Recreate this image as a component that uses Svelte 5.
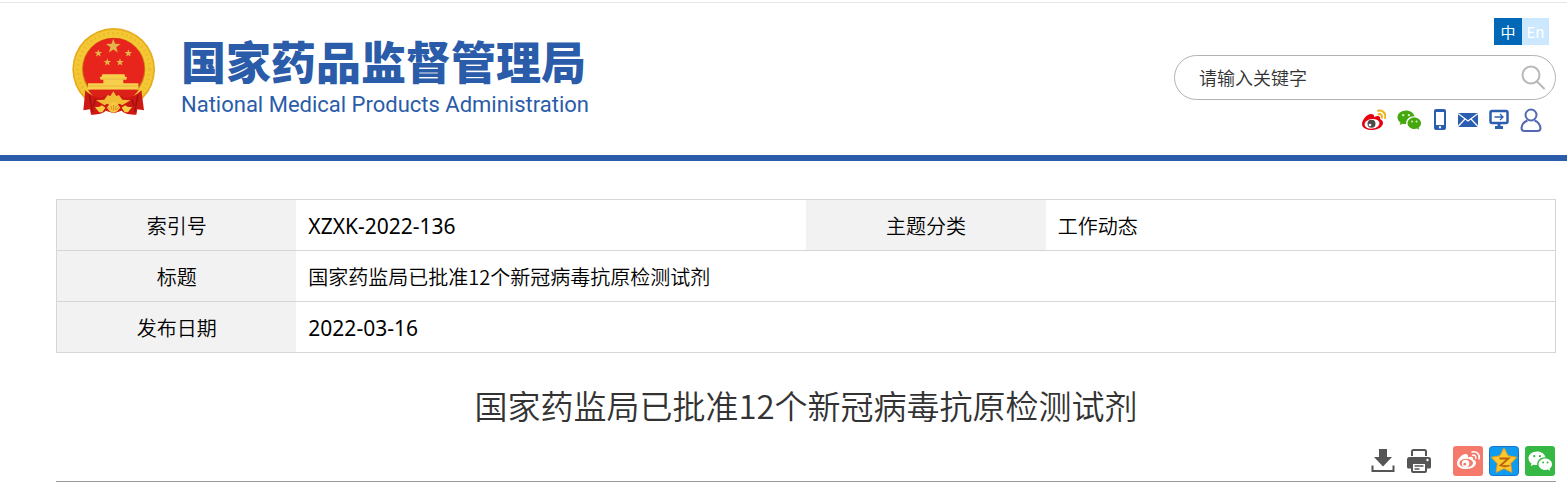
<script lang="ts">
  const title = '国家药监局已批准12个新冠病毒抗原检测试剂';

  const rows = [
    [
      { label: '索引号', value: 'XZXK-2022-136', code: true },
      { label: '主题分类', value: '工作动态' },
    ],
    [{ label: '标题', value: title }],
    [{ label: '发布日期', value: '2022-03-16', code: true }],
  ];

  const emblemStars = [
    [160, 79, 23],
    [115, 100, 12],
    [205, 100, 12],
    [142, 127, 12],
    [180, 127, 12],
  ];

  let keyword = $state('');

  function star(cx: number, cy: number, r: number, inner = 0.4) {
    const points = [];
    for (let i = 0; i < 10; i++) {
      const radius = i % 2 ? r * inner : r;
      const angle = (Math.PI / 5) * i - Math.PI / 2;
      points.push(`${(cx + radius * Math.cos(angle)).toFixed(1)},${(cy + radius * Math.sin(angle)).toFixed(1)}`);
    }
    return points.join(' ');
  }
</script>

{#snippet wechat(eye)}
  <path d="M9.500 2C4.300 2 .5 5.200 .5 9.200c0 2.300 1.200 4.200 3.100 5.500L2.800 17.300l3.100-1.500c1.200.3 2.300.5 3.700.4C9 11.500 12.500 8 18.200 8 17.300 4.400 13.800 2 9.500 2z" />
  <path d="M25 15.300c0-3.400-3.200-6-7-6s-7 2.600-7 6 3.200 6 7 6c.9 0 1.800-.2 2.600-.4l2.500 1.300-.7-2.200c1.600-1.100 2.600-2.800 2.600-4.700z" />
  <g fill={eye}>
    <circle cx="6.500" cy="7" r="1.200" />
    <circle cx="12.400" cy="7" r="1.200" />
    <circle cx="15.700" cy="13.500" r="1" />
    <circle cx="20.300" cy="13.500" r="1" />
  </g>
{/snippet}

<header class="header">
  <div class="wrap header-row">
    <a class="brand" href="#home">
      <svg class="emblem" viewBox="36 24 252 264" aria-hidden="true">
        <circle cx="161" cy="148" r="124" fill="#e6ac1e" />
        <circle cx="161" cy="148" r="119" fill="#f4c735" />
        <circle cx="161" cy="148" r="108" fill="none" stroke="#edba2c" stroke-width="9" stroke-dasharray="5 9" />
        <circle cx="161" cy="148" r="95" fill="#c9810f" />
        <circle cx="161" cy="146" r="92" fill="#e8251d" />
        {#each emblemStars as [cx, cy, r]}
          <polygon points={star(cx, cy, r)} fill="#e3b548" />
        {/each}
        <path d="M127 163h66l3 8h5l-2 8h-9v11h45v19H84v-19h46v-11h-8l-3-8h5z" fill="#f7cf4b" />
        <path d="M84 198h152M128 177h66" stroke="#e0a935" stroke-width="2" />
        <path d="M84 209h152c-7 12-17 21-28 28h-96c-12-7-21-16-28-28z" fill="#dc2119" />
        <path d="M76 211c13 14 30 21 48 22l18-9h36l18 9c19-1 36-9 48-22l8 60-20-3-3 16c-19 0-35-2-44-12l-24 8-24-8c-10 10-27 12-44 12l-3-16-20 3z" fill="#cf1713" />
        <path d="M88 224l10 52m136-52l-10 52M106 238l-6 20m116-20l6 20" stroke="#971312" stroke-width="4" fill="none" />
        <path d="M105 261c9 1 14 0 21-5l10 7-9 14h-10zm111 0c-9 1-14 0-21-5l-10 7 9 14h10z" fill="#f6ce43" />
        <path d="M133 239l10-14 8 3 9-14 9 14 8-3 10 14 25 2-26 15-7-5-19 8-19-8-7 5-26-15z" fill="#f2bd36" />
        <path d="M140 263l9-12 11-5 12 5 9 12-9 11-12 5-11-5z" fill="#f6c943" />
        <path d="M150 268l-8-6m11-5l3 13m5-15v17m8-16l-3 14m11-8l-8 7" stroke="#dd8e22" stroke-width="3" />
      </svg>
      <span class="brand-text">
        <span class="brand-cn">国家药品监督管理局</span>
        <span class="brand-en">National Medical Products Administration</span>
      </span>
    </a>

    <div class="tools">
      <nav class="langs" aria-label="语言">
        <a class="lang active" href="#cn">中</a>
        <a class="lang" href="#en">En</a>
      </nav>
      <form class="search" onsubmit={(e) => e.preventDefault()}>
        <input type="text" aria-label="请输入关键字" placeholder="请输入关键字" bind:value={keyword} />
        <button type="submit" aria-label="搜索">
          <svg width="26" height="26" viewBox="0 0 26 26" fill="none" stroke="#b8b8b8" stroke-width="2">
            <circle cx="11" cy="10" r="8.500" />
            <path d="M17 16.500l7 7" stroke-linecap="round" />
          </svg>
        </button>
      </form>
      <nav class="quick" aria-label="快捷入口">
        <a href="#weibo" aria-label="微博">
          <svg width="24" height="24" viewBox="0 0 24 24">
            <path d="M9 6C5 6 0 12 0 16c0 4 5 6 10 6 7 0 11-4 11-7 0-2-1-3-3-4 .8-3-2-4-6-2 .5-2-.8-3-3-3z" fill="#e60012" />
            <ellipse cx="10" cy="15.800" rx="7.500" ry="4.800" fill="#fff" transform="rotate(-8 10 15.800)" />
            <circle cx="9.500" cy="15.800" r="4" fill="#4b4b4b" />
            <circle cx="8" cy="17" r="1.300" fill="#fff" />
            <path d="M16 2.800c4.500-1.200 8.500 2.600 7 7.200M16.500 6.200c2.400-.5 4 1.200 3.200 3.400" fill="none" stroke="#efb318" stroke-width="2" stroke-linecap="round" />
          </svg>
        </a>
        <a href="#wechat" aria-label="微信">
          <svg width="25" height="24" viewBox="0 0 26 24" fill="#45a80f">{@render wechat('#d9f2c7')}</svg>
        </a>
        <a href="#mobile" aria-label="手机">
          <svg width="14" height="24" viewBox="0 0 14 24">
            <path fill-rule="evenodd" d="M3 1h8a2 2 0 0 1 2 2v17a2 2 0 0 1-2 2H3a2 2 0 0 1-2-2V3a2 2 0 0 1 2-2zm0 3v13h8V4zm4 14a1.200 1.200 0 1 0 0 2.400A1.200 1.200 0 0 0 7 18z" fill="#2b5db0" />
          </svg>
        </a>
        <a href="#mail" aria-label="邮箱">
          <svg width="20" height="24" viewBox="0 0 20 24">
            <path d="M0 5h20v14H0z" fill="#2b5db0" />
            <path d="M0 5.500l10 7.500 10-7.500M0 18.500l7-7.500m13 7.500L13 11" fill="none" stroke="#fff" stroke-width="1.200" />
          </svg>
        </a>
        <a href="#desktop" aria-label="电脑版">
          <svg width="20" height="24" viewBox="0 0 20 24" fill="none" stroke="#2b5db0" stroke-width="2">
            <rect x="1.500" y="3" width="17" height="12" rx="1.500" stroke-width="2.500" />
            <path d="M10 15v4M6 19.500h8" stroke-width="3" />
            <path d="M5.500 9H14M11 6l3 3-3 3" stroke-width="1.300" />
          </svg>
        </a>
        <a href="#user" aria-label="用户">
          <svg width="22" height="24" viewBox="0 0 22 24" fill="none" stroke="#5468b4" stroke-width="2">
            <circle cx="11" cy="7" r="5.500" />
            <path d="M7.500 12.500C3.500 14 2 16.500 1.500 20c0 2 1 3 3 3h13c2 0 3-1 3-3-.5-3.500-2-6-6-7.500" />
          </svg>
        </a>
      </nav>
    </div>
  </div>
</header>

<main class="wrap">
  <table class="info">
    <colgroup>
      <col class="col-label" /><col class="col-value" />
      <col class="col-label" /><col class="col-value" />
    </colgroup>
    <tbody>
      {#each rows as row}
        <tr>
          {#each row as cell}
            <th scope="row">{cell.label}</th>
            <td class:code={cell.code} colspan={row.length === 1 ? 3 : 1}>{cell.value}</td>
          {/each}
        </tr>
      {/each}
    </tbody>
  </table>

  <h1>{title}</h1>

  <div class="actions">
    <div class="file-actions">
      <button type="button" aria-label="下载">
        <svg width="24" height="26" viewBox="0 0 24 26" fill="#555">
          <path d="M8 1h8v8h5l-9 9.500L3 9h5z" />
          <path d="M1.500 17.500V23h21v-5.500" fill="none" stroke="#555" stroke-width="2" />
        </svg>
      </button>
      <button type="button" aria-label="打印">
        <svg width="24" height="26" viewBox="0 0 24 26" fill="#555">
          <path d="M5 8V3.500A1.500 1.500 0 0 1 6.500 2h11A1.500 1.500 0 0 1 19 3.500V8" fill="none" stroke="#555" stroke-width="2" />
          <path d="M2.500 9h19A2.500 2.500 0 0 1 24 11.500V19a1.500 1.500 0 0 1-1.500 1.500h-21A1.500 1.500 0 0 1 0 19v-7.500A2.500 2.500 0 0 1 2.500 9z" />
          <circle cx="20.500" cy="12" r="1.200" fill="#fff" />
          <rect x="5" y="15" width="14" height="9" rx="1" fill="#fff" stroke="#555" stroke-width="2" />
          <path d="M7.500 18h9M7.500 21h5" stroke="#555" stroke-width="1.500" />
        </svg>
      </button>
    </div>
    <div class="share">
      <a href="#share-weibo" aria-label="分享到微博">
        <svg width="30" height="30" viewBox="0 0 30 30">
          <rect width="30" height="30" rx="3" fill="#f67a6c" />
          <path d="M12 8c-4 1-8 5.500-8 9.500C4 21 8 23 13 23c6 0 10-3 10-6 0-2-1-3-3-3.500.6-2.500-1.500-3.500-5-2C15.500 9 14.500 7.500 12 8z" fill="#fff" />
          <ellipse cx="13.200" cy="17" rx="6.800" ry="4.300" fill="#f67a6c" />
          <circle cx="12.600" cy="17.500" r="3.700" fill="#fff" />
          <circle cx="11.800" cy="18.200" r="1.400" fill="#f67a6c" />
          <path d="M19 6c4.500-1.200 8.500 2.500 7 7M19.500 9.200c2.200-.5 3.800 1 3.200 3.200" fill="none" stroke="#fff" stroke-width="1.500" stroke-linecap="round" />
        </svg>
      </a>
      <a href="#share-qzone" aria-label="分享到QQ空间">
        <svg width="30" height="30" viewBox="0 0 30 30">
          <rect x="0.500" y="0.500" width="29" height="29" rx="3" fill="#0f9cf0" stroke="#1675c4" />
          <polygon points={star(15, 15.5, 13.5, 0.52)} fill="#fdc92c" stroke="#eb9c17" stroke-linejoin="round" />
          <path d="M10.500 12.500h9L11.500 19.500c3 1 6 1 9 0" fill="none" stroke="#b9620b" stroke-width="1.800" />
        </svg>
      </a>
      <a href="#share-wechat" aria-label="分享到微信">
        <svg width="30" height="30" viewBox="0 0 30 30">
          <rect width="30" height="30" rx="3" fill="#35b944" />
          <svg x="3" y="3" width="25" height="24" viewBox="0 0 26 24" fill="#fff">{@render wechat('#35b944')}</svg>
        </svg>
      </a>
    </div>
  </div>
</main>

<style>
  :global(body) {
    margin: 0;
    background: #fff;
    color: #000;
    font-family: "Noto Sans CJK SC", sans-serif;
  }

  a { color: inherit; text-decoration: none; }
  svg { display: block; }

  button {
    padding: 0;
    border: 0;
    background: none;
    cursor: pointer;
  }

  .wrap { margin: 0 11px 0 56px; }

  .header {
    margin-top: 2px;
    border-top: 1px solid #e6e6e6;
    border-bottom: 6px solid #2a5caa;
  }

  .header-row {
    display: flex;
    justify-content: space-between;
    align-items: flex-start;
    padding: 15px 0 23px;
  }

  .brand {
    display: flex;
    gap: 25px;
    padding: 10px 0 0 16px;
    color: #2a5caa;
    white-space: nowrap;
  }

  .emblem { width: 84px; height: 88px; }

  .brand-text {
    display: flex;
    flex-direction: column;
    padding-top: 8px;
  }

  .brand-cn {
    font-size: 45px;
    font-weight: 900;
    line-height: 50px;
  }

  .brand-en {
    font: 400 22px/38px Roboto, sans-serif;
  }

  .tools {
    display: flex;
    flex-direction: column;
    align-items: flex-end;
    width: 382px;
  }

  .langs {
    display: flex;
    margin: 0 7px 10px 0;
  }

  .lang {
    width: 27px;
    background: #cce8ff;
    color: #fff;
    font-size: 15px;
    line-height: 27px;
    text-align: center;
  }

  .lang.active {
    width: 28px;
    background: #0068b7;
  }

  .search {
    display: flex;
    align-items: center;
    box-sizing: border-box;
    width: 100%;
    height: 45px;
    padding: 0 9px 0 24px;
    border: 1px solid #b3b3b3;
    border-radius: 23px;
  }

  .search input {
    flex: 1;
    min-width: 0;
    padding: 0;
    border: 0;
    outline: 0;
    background: none;
    color: #333;
    font: 350 18px/27px "Noto Sans CJK SC", sans-serif;
  }

  .search input::placeholder { color: #333; opacity: 1; }

  .quick {
    display: flex;
    gap: 11px;
    margin: 8px 14px 0 0;
  }

  .info {
    width: 100%;
    margin-top: 38px;
    border: 1px solid #d6d6d6;
    border-collapse: collapse;
    table-layout: fixed;
    font-size: 20px;
    line-height: 30px;
  }

  .col-label { width: 16%; }
  .col-value { width: 34%; }

  .info tr { border-bottom: 1px solid #d6d6d6; }

  .info th,
  .info td {
    padding: 11px 12px 9px;
    font-weight: 350;
  }

  .info th {
    background: #f2f2f2;
    text-align: center;
  }

  .info td { text-align: left; }

  .info .code {
    font-family: "Noto Sans", sans-serif;
    font-size: 21px;
    font-weight: 400;
  }

  h1 {
    margin: 28px 0 0;
    color: #333;
    font-size: 33px;
    font-weight: 350;
    line-height: 48px;
    text-align: center;
  }

  .actions {
    display: flex;
    justify-content: flex-end;
    align-items: center;
    gap: 22px;
    padding: 17px 1px 5px 0;
    border-bottom: 1px solid #999;
  }

  .file-actions { display: flex; gap: 12px; }
  .share { display: flex; gap: 6px; }
</style>
